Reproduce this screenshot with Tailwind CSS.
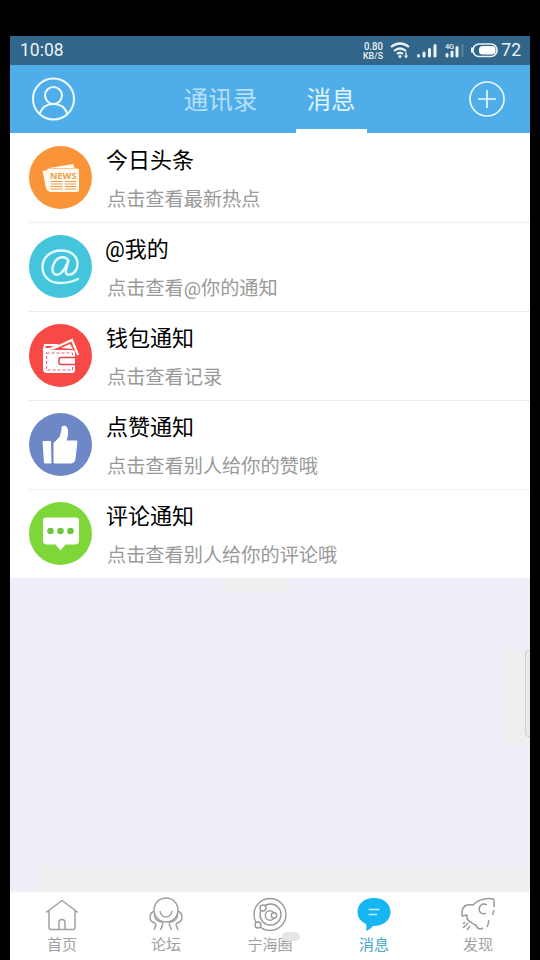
<!DOCTYPE html>
<html lang="zh-CN">
<head>
<meta charset="utf-8">
<title>消息</title>
<script src="https://cdn.jsdelivr.net/npm/@tailwindcss/browser@4"></script>
</head>
<body class="h-[960px] w-[540px] overflow-hidden bg-black px-[10px] pt-[36px] font-['Roboto','Noto_Sans_CJK_SC',sans-serif]">
<div class="flex h-[924px] w-[520px] flex-col overflow-hidden bg-[#eeeef8]">
  <!-- status bar -->
  <div class="flex h-[29px] shrink-0 items-center justify-between bg-[#32658a] pl-[10px] pr-[9px] text-[#e9f2f5]">
    <span class="text-[17.5px] leading-none">10:08</span>
    <div class="flex items-center">
      <svg class="block" width="140" height="25" viewBox="360 37.5 140 25" fill="none" stroke="#e9f2f5">
        <g fill="#e9f2f5" stroke="none" font-family="Roboto" font-weight="500"><text x="364" y="49.500" font-size="10" textLength="19" lengthAdjust="spacingAndGlyphs">0.80</text><text x="363" y="58" font-size="8.5" textLength="20" lengthAdjust="spacingAndGlyphs">KB/S</text><text x="445" y="48" font-size="7.5" textLength="9">4G</text></g>
        <g stroke-width="2.200"><path d="M391 46.500q9-7 18 0M394 50.500q6-5 12 0M397 53.500q3-2.500 6 0"/></g>
        <circle cx="400" cy="56" r="1.500" fill="#e9f2f5" stroke="none"/><path d="M406 51.500v5M404.500 55l1.500 2 1.500-2" stroke-width="1.200"/>
        <g stroke-width="3" stroke-linecap="round"><path d="M418.500 55v.5M424 52.500v3M429.500 49v6.500M435 45v10.500"/><path d="M447 54v1.500M452 51.500v4M457 47v8.500"/><path d="M462.500 44.500v11" stroke="#5c8799" stroke-width="2"/></g>
        <rect x="473" y="43.500" width="24" height="12.500" rx="6" stroke-width="1.700"/><rect x="479" y="45.500" width="16.500" height="8.500" rx="3.500" fill="#fff" stroke="none"/><path d="M472 47v5" stroke-width="2"/>
      </svg>
      <span class="pl-px text-[17.5px] leading-none">72</span>
    </div>
  </div>
  <!-- header -->
  <header class="flex h-[68px] shrink-0 items-center bg-[#4faee9]">
    <svg class="mb-px ml-[21px] shrink-0" width="44" height="44" viewBox="0 0 44 44" fill="none" stroke="#eefaff" stroke-width="2"><circle cx="22.500" cy="22" r="20.500"/><circle cx="22.500" cy="18.500" r="8.500"/><path d="M8.500 37Q12 27 22.500 27T36.500 37"/></svg>
    <nav class="ml-[97px] flex h-full text-[24.5px] leading-[72px]">
      <span class="flex w-[100px] justify-center text-[#b5dff7]"><span class="-ml-[3px]">通讯录</span></span>
      <span class="ml-[24px] flex h-full w-[71px] justify-center border-b-4 border-white text-[#e0f4fd]"><span class="-ml-px">消息</span></span>
    </nav>
    <svg class="mb-px ml-auto mr-[24px] shrink-0" width="38" height="38" viewBox="0 0 38 38" fill="none" stroke="#eaf9ff" stroke-width="1.700"><circle cx="19" cy="19" r="17"/><path d="M10 19h18M19 10v18"/></svg>
  </header>
  <!-- message list -->
  <main class="h-[445px] shrink-0 bg-white">
    <div class="ml-[19px] flex h-[89px]">
      <svg class="mt-[13px] shrink-0" width="63" height="63" viewBox="0 0 63 63"><circle cx="31.500" cy="31.500" r="31.500" fill="#fa9439"/><path d="M13.500 25l5-1 2 21q-3 0-3.500-3z" fill="#fffaf0"/><path d="M20 22l24-4 1.500 4z" fill="#fffaf0"/><path d="M18.500 22.500H48q2 0 2 2v19q0 2.500-2 2.500H22q-3.500 0-3.500-4z" fill="#fffaf0"/><text x="21" y="32.500" font-size="9.5" font-family="Open Sans" font-weight="700" fill="#f4a04a" textLength="26.500" lengthAdjust="spacingAndGlyphs">NEWS</text><path d="M21.500 35.500h12M36 35.500h11M21.500 38h12M36 38h11M21.500 40.500h12M36 40.500h11M21.500 43h12M36 43h11" stroke="#e69d4c" stroke-width="1.200"/></svg>
      <div class="ml-[14px] flex-1 pt-[10px]"><div class="h-[36px] text-[22px] leading-[36px] text-black">今日头条</div><div class="pl-px pt-[5px] text-[19.2px] leading-[32px] text-[#999]">点击查看最新热点</div></div>
    </div>
    <div class="ml-[19px] flex h-[89px] border-t border-[#ebecf0]">
      <svg class="mt-[12px] shrink-0" width="63" height="63" viewBox="0 0 63 63"><circle cx="31.500" cy="31.500" r="31.500" fill="#45c5dc"/><path d="M39.500 26c-2-5-11-6-15 3.500-3 8 1 12.500 7 9 4-3 6-8 8-13-2 8-4.500 13-1 14 6 1 10.500-5 10-11C48 19 40 15.500 32 15.500 20 15.500 13 24 13.500 33 14 42 21 48 31 48q10 0 18-4" fill="none" stroke="#e3fbff" stroke-width="2.400" stroke-linecap="round"/></svg>
      <div class="ml-[14px] flex-1 pt-[9px]"><div class="h-[36px] text-[22px] leading-[36px] text-black"><span class="-ml-px">@我的</span></div><div class="pl-px pt-[5px] text-[19.2px] leading-[32px] text-[#999]">点击查看@你的通知</div></div>
    </div>
    <div class="ml-[19px] flex h-[89px] border-t border-[#ebebf1]">
      <svg class="mt-[12px] shrink-0" width="63" height="63" viewBox="0 0 63 63"><circle cx="31.500" cy="31.500" r="31.500" fill="#f74946"/><path d="M16 21h13l-8 4h-6zM23 25l20-9 6 15" fill="none" stroke="#fff" stroke-width="2.200"/><path d="M32 24l9-4 3 5z" fill="#fff"/><path d="M14 22q0 4 4 4h25q3 0 3 3v17q0 3-3 3H18q-4 0-4-4z" fill="#fff"/><path d="M17.500 29H43.500v17H17.500z" fill="none" stroke="#df6270" stroke-dasharray="3 2"/><path d="M46 33.500H32q-2 0-2 2v3q0 2 2 2h14" fill="#fff" stroke="#df4550" stroke-width="1.500"/></svg>
      <div class="ml-[14px] flex-1 pt-[9px]"><div class="h-[36px] text-[22px] leading-[36px] text-black">钱包通知</div><div class="pl-px pt-[5px] text-[19.2px] leading-[32px] text-[#999]">点击查看记录</div></div>
    </div>
    <div class="ml-[19px] flex h-[89px] border-t border-[#ebebf2]">
      <svg class="mt-[12px] shrink-0" width="63" height="63" viewBox="0 0 63 63"><circle cx="31.500" cy="31.500" r="31.500" fill="#6e87c6"/><path d="M14 28.500h7.500l.5 21.500h-6.500zM25 30l6-6 2-7v-3q2-2 4.500 0 2.500 5-.5 14h11l-2 18q-.5 4-4 4H25z" fill="#fff" stroke="#fff" stroke-linejoin="round"/></svg>
      <div class="ml-[14px] flex-1 pt-[9px]"><div class="h-[36px] text-[22px] leading-[36px] text-black">点赞通知</div><div class="pl-px pt-[5px] text-[19.2px] leading-[32px] text-[#999]">点击查看别人给你的赞哦</div></div>
    </div>
    <div class="ml-[19px] flex h-[89px] border-t border-[#efeff1]">
      <svg class="mt-[12px] shrink-0" width="63" height="63" viewBox="0 0 63 63"><circle cx="31.500" cy="31.500" r="31.500" fill="#7dd739"/><path d="M17 15.500h30q3 0 3 3v20q0 4-4 4h-9.500l-5 6-5-6H18q-4 0-4-4v-20q0-3 3-3z" fill="#fff"/><g fill="#6dc63d"><circle cx="21.500" cy="29" r="3.300"/><circle cx="31.500" cy="29" r="3.300"/><circle cx="41.500" cy="29" r="3.300"/></g></svg>
      <div class="ml-[14px] flex-1 pt-[9px]"><div class="h-[36px] text-[22px] leading-[36px] text-black">评论通知</div><div class="pl-px pt-[5px] text-[19.2px] leading-[32px] text-[#999]">点击查看别人给你的评论哦</div></div>
    </div>
  </main>
  <div class="flex min-h-0 flex-1 flex-col">
    <div class="ml-[215px] h-[13px] w-[63px] bg-[#eeeeef]"></div>
    <div class="ml-auto mt-[60px] flex h-[95px] w-[27px] justify-end bg-[#eeeeef]"><div class="-mt-px h-[87px] w-[5px] rounded-l border border-r-0 border-[#ccd2d0] bg-[#e7ebea]"></div></div>
    <div class="ml-[29px] mt-auto h-[25px] bg-[#eeeeef]"></div>
  </div>
  <!-- tab bar -->
  <nav class="grid h-[69px] shrink-0 grid-cols-5 border-t-2 border-[#f7f7f8] bg-white text-[15px] leading-[25px] text-[#a0a0a0]">
    <div class="flex flex-col items-center pt-[4px]"><svg width="36" height="36" viewBox="0 0 36 36" fill="none" stroke="#a0a0a0" stroke-width="1.500" stroke-linejoin="round"><path d="M2 15.500L18 3.500l16 12M5 13.500v17q0 2 2 2h22q2 0 2-2v-17M15 32.500v-7q0-3 3-3t3 3v7"/></svg><span>首页</span></div>
    <div class="flex flex-col items-center pt-[4px]"><svg width="36" height="36" viewBox="0 0 36 36" fill="none" stroke="#a0a0a0" stroke-width="1.500" stroke-linejoin="round"><circle cx="18" cy="13" r="12"/><path d="M12 14q1 6 6 6t6-6M6 14q-4 2-4 6 0 5 5 6l1 2-2 5M30 14q4 2 4 6 0 5-5 6l-1 2 2 5M6.500 17q0 6 5 7.500 4 .5 3 3.500l-2 5M29.500 17q0 6-5 7.500-4 .5-3 3.500l2 5"/></svg><span>论坛</span></div>
    <div class="relative flex flex-col items-center pt-[4px]"><svg width="36" height="36" viewBox="0 0 36 36" fill="none" stroke="#999" stroke-width="1.400"><circle cx="18" cy="17.500" r="16"/><circle cx="18.500" cy="17.500" r="10.500"/><circle cx="11" cy="11" r="3" fill="#fff"/><circle cx="6" cy="28" r="3" fill="#fff"/><circle cx="18" cy="18.500" r="4.700"/><circle cx="22" cy="18.500" r="2.700" fill="#fff"/></svg><span>宁海圈</span><div class="absolute left-[64px] top-[39px] h-[9px] w-[18px] rounded-full bg-[#e5e5e5]"></div></div>
    <div class="flex flex-col items-center pt-[4px] text-[#4aa8cb]"><svg width="36" height="36" viewBox="0 0 36 36"><path d="M18 1C8 1 1.500 7 1.500 15q0 8 8.500 12 1 3 0 7 4-1 7-5C28 29 34.500 23 34.500 15S28 1 18 1z" fill="#15b6f3"/><path d="M12.500 12.500h11M12.500 17.500h8.500" stroke="#ccefff" stroke-width="1.500"/></svg><span>消息</span></div>
    <div class="flex flex-col items-center pt-[4px]"><svg width="36" height="36" viewBox="0 0 36 36" fill="none" stroke="#999" stroke-width="1.500" stroke-linejoin="round"><path d="M34 10q.5-5-.5-8Q21 0 13 8 3 6 2 15v4l5-1q-1 5 4 7 1 2 5 3 1 4 5 4l2-1M27 30q2-4 1.500-7M34 13q-.5 3-1.500 5M27 8q-3-2-6 0-3 3-1 7 3 3 6 1M8 26l-5 5M5 25l-2 2M10 29l-3 4"/></svg><span>发现</span></div>
  </nav>
</div>
</body>
</html>
